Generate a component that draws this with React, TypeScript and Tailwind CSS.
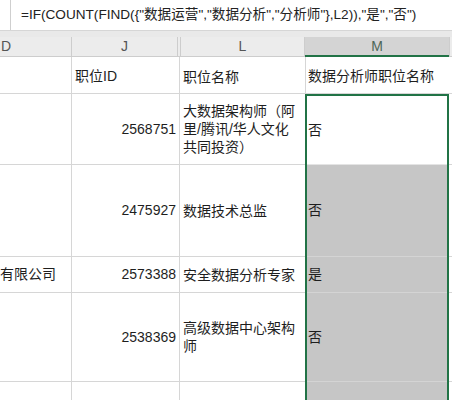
import React from "react";

const font = { fontFamily: '"Liberation Sans", "Noto Sans CJK SC", sans-serif' };

const formula = '=IF(COUNT(FIND({"数据运营","数据分析","分析师"},L2)),"是","否")';

type Row = {
  h: string;
  d?: string;
  id?: string;
  name?: React.ReactNode;
  m?: string;
  selected?: boolean;
  active?: boolean;
};

const rows: Row[] = [
  { h: "h-[37px]", id: "职位ID", name: "职位名称", m: "数据分析师职位名称" },
  {
    h: "h-[71px]",
    id: "2568751",
    name: (
      <>
        大数据架构师（阿
        <br />
        里/腾讯/华人文化
        <br />
        共同投资）
      </>
    ),
    m: "否",
    selected: true,
    active: true,
  },
  { h: "h-[92px]", id: "2475927", name: "数据技术总监", m: "否", selected: true },
  { h: "h-[36px]", d: "有限公司", id: "2573388", name: "安全数据分析专家", m: "是", selected: true },
  {
    h: "h-[89px]",
    id: "2538369",
    name: (
      <>
        高级数据中心架构
        <br />
        师
      </>
    ),
    m: "否",
    selected: true,
  },
  { h: "h-[40px]", selected: true },
];

export default function App() {
  return (
    <div className="w-[452px] h-[400px] overflow-hidden bg-white text-[14px] text-[#1e1e1e]" style={font}>
      {/* Formula bar */}
      <div className="flex h-[31px] border-b border-[#d6d6d6] bg-white">
        <div className="w-[11px] border-r border-[#cfcfcf]" />
        <div className="flex items-center pl-[10px] whitespace-nowrap text-[13.6px] text-[#222]">{formula}</div>
      </div>
      <div className="h-[6px] bg-[#e9e9e9]" />

      {/* Column headers */}
      <div className="flex h-[20px] bg-[#ececec] text-[#555] text-[14px] leading-[19px]">
        <div className="w-[72px] border-r border-b border-[#cdcdcd] pl-[1px]">D</div>
        <div className="w-[106px] border-r border-b border-[#cdcdcd] text-center">J</div>
        <div className="w-[3px] border-r border-b border-[#cdcdcd]" />
        <div className="w-[124px] border-r border-b border-[#cdcdcd] text-center">L</div>
        <div className="w-[144px] border-b-2 border-[#217346] bg-[#d4d4d4] text-center text-[#4d6757]">M</div>
        <div className="flex-1 border-b border-l border-[#cdcdcd]" />
      </div>

      {/* Cells */}
      {rows.map((r, i) => (
        <div key={i} className={`flex ${r.h}`}>
          <div className="w-[72px] flex items-center border-r border-b border-[#d6d6d6] whitespace-nowrap overflow-hidden">
            {r.d}
          </div>
          <div
            className={`w-[108px] flex items-center border-r border-b border-[#d6d6d6] pr-[3px] ${
              i === 0 ? "justify-start pl-[3px] pt-[3px]" : "justify-end"
            }`}
          >
            {r.id}
          </div>
          <div
            className={`w-[125px] flex items-center border-b border-[#d6d6d6] pl-[3px] leading-[18px] whitespace-nowrap ${
              i === 0 ? "pt-[3px]" : ""
            }`}
          >
            <div>{r.name}</div>
          </div>
          {r.selected ? (
            <div
              className={`w-[144px] flex items-center border-l-2 border-r-2 border-[#217346] ${
                r.active ? "border-t-2 bg-white" : "bg-[#c6c6c6]"
              }`}
            >
              <div
                className={`flex h-full w-full items-center border-b pl-[1px] ${
                  r.active ? "border-[#e4e4e4]" : "border-[#d4d4d4]"
                }`}
              >
                {r.m}
              </div>
            </div>
          ) : (
            <div
              className={`w-[144px] flex items-center border-l border-b border-[#d6d6d6] pl-[2px] whitespace-nowrap ${
                i === 0 ? "pt-[3px]" : ""
              }`}
            >
              {r.m}
            </div>
          )}
          <div className="flex-1 border-b border-[#d6d6d6]" />
        </div>
      ))}
    </div>
  );
}
